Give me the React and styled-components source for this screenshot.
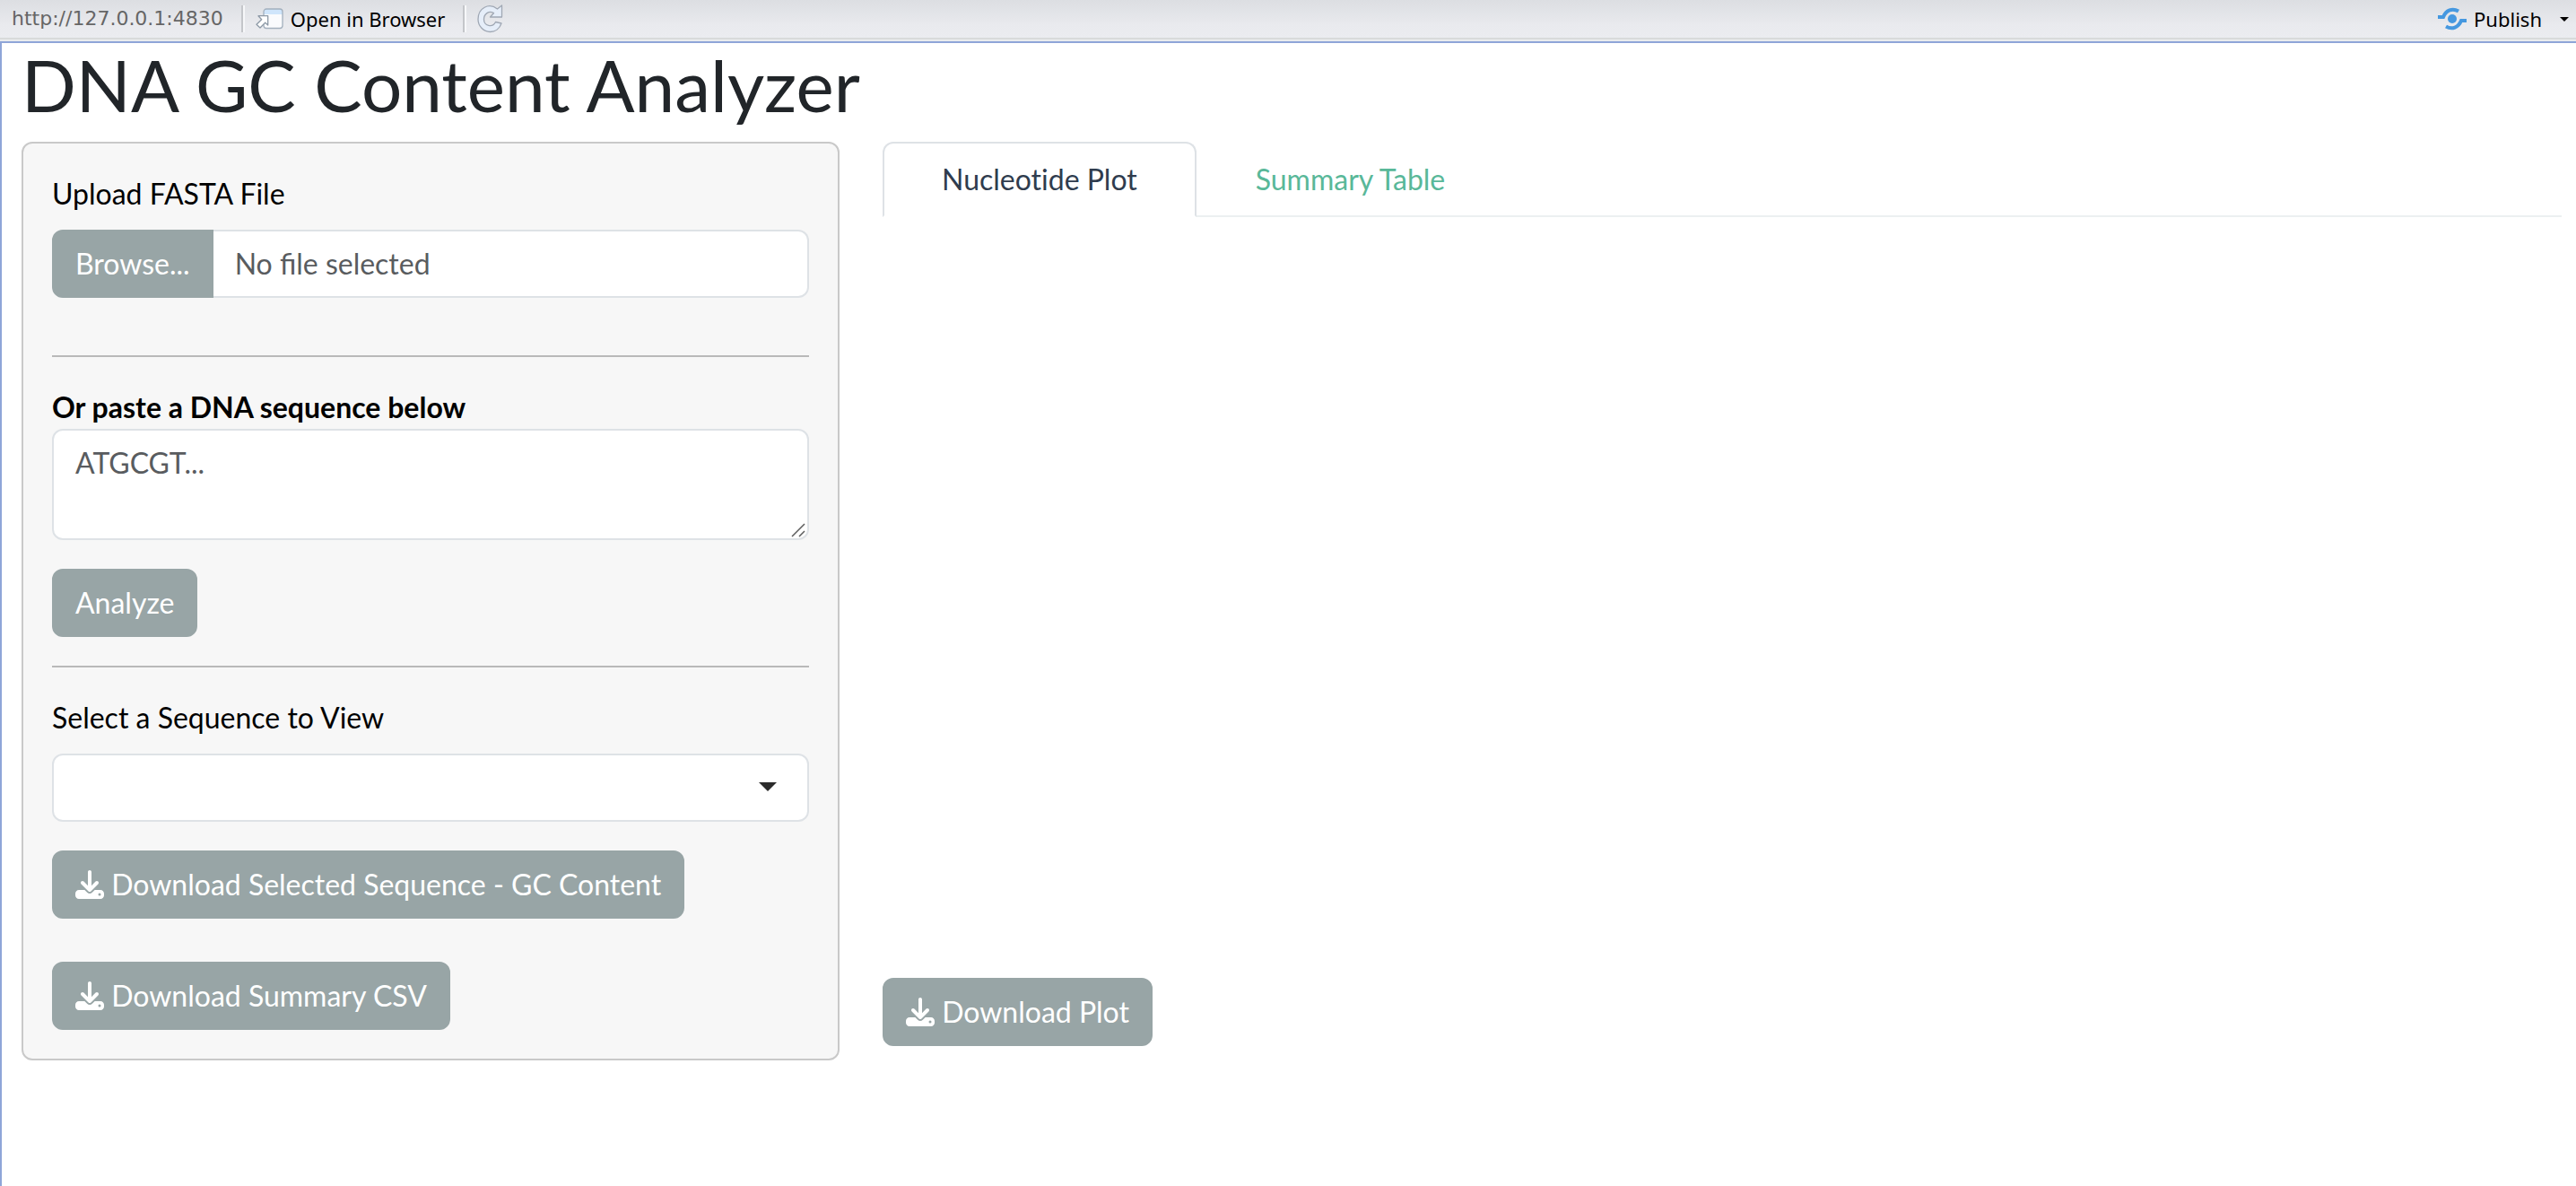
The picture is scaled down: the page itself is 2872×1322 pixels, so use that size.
import React, { useState } from "react";
import styled, { createGlobalStyle, css } from "styled-components";

const GlobalStyle = createGlobalStyle`
  *, *::before, *::after { box-sizing: border-box; }
  html, body { margin: 0; background: #fff; }
  body { font-family: Lato, "Liberation Sans", sans-serif; font-size: 32px; line-height: 48px; color: #212529; }
`;

const Window = styled.div`
  display: flex;
  flex-direction: column;
  min-height: 100vh;
`;

const Toolbar = styled.header`
  display: flex;
  align-items: center;
  height: 46px;
  padding: 0 8px 4px 13px;
  background: linear-gradient(#dcdee2, #e9eaee 28px, #ebecf0 42px, #d8dadb 42px, #d8dadb 44px, #eaecee 44px);
  font-family: "Noto Sans", sans-serif;
  font-size: 22px;
  line-height: 30px;
`;

const Address = styled.span`
  font-family: "DejaVu Sans", sans-serif;
  color: #666;
`;

const Separator = styled.span`
  width: 4px;
  height: 30px;
  margin: 0 12px 0 20px;
  background: linear-gradient(to right, #c4c6ca 2px, #f6f7f9 2px);
`;

const ToolButton = styled.button`
  display: flex;
  align-items: center;
  gap: 8px;
  padding: 0;
  border: 0;
  background: none;
  color: #000;
  font: inherit;
  cursor: pointer;

  svg { display: block; flex: none; }
`;

const PublishGroup = styled.div`
  display: flex;
  align-items: center;
  gap: 20px;
  margin-left: auto;
`;

const Viewer = styled.main`
  flex: 1;
  padding: 0 16px 0 24px;
  box-shadow: inset 2px 2px #8fa5d8;
`;

const Title = styled.h2`
  margin: 0 0 16px;
  font-size: 80px;
  line-height: 96px;
  font-weight: 400;
`;

const Columns = styled.div`
  display: grid;
  grid-template-columns: 19fr 39fr;
  gap: 48px;
  align-items: start;
`;

const Well = styled.form`
  display: flex;
  flex-direction: column;
  padding: 32px;
  border: 2px solid #c9c9c9;
  border-radius: 12px;
  background: #f7f7f7;
`;

const Field = styled.div`
  margin-bottom: 32px;
`;

const Label = styled.label`
  display: block;
  margin-bottom: ${(p) => (p.$strong ? 0 : 16)}px;
  font-weight: ${(p) => (p.$strong ? 700 : 400)};
  color: #000;
`;

const Rule = styled.hr`
  width: 100%;
  height: 2px;
  margin: 32px 0;
  border: 0;
  background: #b9b9b9;
`;

const control = css`
  display: block;
  width: 100%;
  margin: 0;
  padding: 12px 24px;
  border: 2px solid #dee2e6;
  border-radius: 12px;
  background: #fff;
  color: #212529;
  font: inherit;

  &::placeholder { color: #595c5f; opacity: 1; }
`;

const FileRow = styled.div`
  display: flex;
`;

const FileName = styled.input`
  ${control}
  flex: 1;
  min-width: 0;
  border-left: 0;
  border-radius: 0 12px 12px 0;
`;

const TextArea = styled.textarea`
  ${control}
  resize: none;
`;

const Select = styled.select`
  ${control}
  height: 76px;
  appearance: none;
`;

const Overlaid = styled.div`
  position: relative;
`;

const Grip = styled.svg`
  position: absolute;
  right: 4px;
  bottom: 3px;
`;

const Caret = styled.svg`
  position: absolute;
  right: 36px;
  top: 32px;
  pointer-events: none;
`;

const button = css`
  display: inline-block;
  padding: 12px 24px;
  border: 2px solid #98a5a6;
  border-radius: 12px;
  background: #98a5a6;
  color: #fff;
  font: inherit;
  white-space: nowrap;
  text-decoration: none;
  cursor: pointer;
`;

const Button = styled.button`
  ${button}
  align-self: flex-start;
`;

const BrowseButton = styled.label`
  ${button}
  border-radius: 12px 0 0 12px;

  input { display: none; }
`;

const Downloads = styled.div`
  display: flex;
  flex-direction: column;
  align-items: flex-start;
  gap: 48px;
`;

const DownloadLink = styled.a`
  ${button}

  svg { height: 1em; width: 1em; vertical-align: -4px; }
`;

const Tabs = styled.div`
  display: flex;
  border-bottom: 2px solid #ecf0f1;
`;

const Tab = styled.button`
  margin-bottom: -2px;
  padding: 16px 64px;
  border: 2px solid;
  border-color: ${(p) => (p.$active ? "#dee2e6 #dee2e6 #fff" : "transparent")};
  border-radius: 12px 12px 0 0;
  background: ${(p) => (p.$active ? "#fff" : "none")};
  color: ${(p) => (p.$active ? "#2f3c4e" : "#59b899")};
  font: inherit;
  font-variant-ligatures: no-common-ligatures;
  cursor: pointer;
`;

const PlotArea = styled.div`
  height: 800px;
  margin-bottom: 48px;
`;

const DownloadIcon = () => (
  <svg viewBox="0 0 512 512" fill="currentColor" aria-hidden="true">
    <path d="M288 32c0-17.7-14.3-32-32-32s-32 14.3-32 32V274.7l-73.4-73.4c-12.5-12.5-32.8-12.5-45.3 0s-12.5 32.8 0 45.3l128 128c12.5 12.5 32.8 12.5 45.3 0l128-128c12.5-12.5 12.5-32.8 0-45.3s-32.8-12.5-45.3 0L288 274.7V32zM64 352c-35.3 0-64 28.7-64 64v32c0 35.3 28.7 64 64 64H448c35.3 0 64-28.7 64-64V416c0-35.3-28.7-64-64-64H346.5l-45.3 45.3c-25 25-65.5 25-90.5 0L165.5 352H64zm368 56a24 24 0 1 1 0 48 24 24 0 1 1 0-48z" />
  </svg>
);

const OpenIcon = () => (
  <svg width="31" height="24" viewBox="0 0 31 24" aria-hidden="true">
    <rect x="9" y="1" width="21" height="21.500" rx="3" fill="#fafbfd" />
    <path d="M9 7V4q0-3 3-3h15q3 0 3 3v3z" fill="#cfe5fb" />
    <rect x="9" y="1" width="21" height="21.500" rx="3" fill="none" stroke="#a3b0bd" strokeWidth="1.300" />
    <path d="M3 8.700H13.700V19L10.700 16.300 5 22 1 18.300 6.700 12.700z" fill="#fff" stroke="#8d99a6" strokeWidth="1.300" strokeLinejoin="round" />
  </svg>
);

const RefreshIcon = () => (
  <svg width="29" height="34" viewBox="0 0 29 34" aria-hidden="true">
    <path
      d="M27.500 2V15H14.500L18.500 10.500C13 7.500 7.500 11.500 7.500 17.500C7.500 25 17 27.500 20.500 20.500L27 22C25 28 20 31.500 14.500 31.500C7 31.500 1 25 1 17.500C1 5 13 -1.500 22.500 6z"
      fill="#e6eef9"
      stroke="#a0a8b4"
      strokeWidth="1.300"
      strokeLinejoin="round"
    />
  </svg>
);

const PublishIcon = () => (
  <svg width="32" height="26" viewBox="0 0 32 26" fill="none" stroke="#4598e0" strokeWidth="4" aria-hidden="true">
    <circle cx="16" cy="13" r="5" fill="#4598e0" stroke="none" />
    <path d="M0 11h6c3-7.500 10-10.500 17-6.500" />
    <path d="M32 15h-6c-3 7.500-10 10.500-17 6.500" />
  </svg>
);

export default function App() {
  const [tab, setTab] = useState("plot");
  const [fileName, setFileName] = useState("");

  return (
    <>
      <GlobalStyle />
      <Window>
        <Toolbar>
          <Address>http://127.0.0.1:4830</Address>
          <Separator />
          <ToolButton type="button">
            <OpenIcon />
            Open in Browser
          </ToolButton>
          <Separator />
          <ToolButton type="button" aria-label="Refresh">
            <RefreshIcon />
          </ToolButton>
          <PublishGroup>
            <ToolButton type="button">
              <PublishIcon />
              Publish
            </ToolButton>
            <ToolButton type="button" aria-label="Publish options">
              <svg width="10" height="5" viewBox="0 0 10 5" aria-hidden="true">
                <path d="M0 0h10L5 5z" fill="#000" />
              </svg>
            </ToolButton>
          </PublishGroup>
        </Toolbar>
        <Viewer>
          <Title>DNA GC Content Analyzer</Title>
          <Columns>
            <Well onSubmit={(e) => e.preventDefault()}>
              <Field>
                <Label htmlFor="fasta-name">Upload FASTA File</Label>
                <FileRow>
                  <BrowseButton>
                    Browse...
                    <input
                      type="file"
                      onChange={(e) => setFileName(e.target.files[0]?.name ?? "")}
                    />
                  </BrowseButton>
                  <FileName id="fasta-name" type="text" placeholder="No file selected" value={fileName} readOnly />
                </FileRow>
              </Field>
              <Rule />
              <Field>
                <Label $strong htmlFor="sequence">Or paste a DNA sequence below</Label>
                <Overlaid>
                  <TextArea id="sequence" rows={2} placeholder="ATGCGT..." />
                  <Grip width="16" height="16" viewBox="0 0 16 16" stroke="#5c5c5c" strokeWidth="1.5" aria-hidden="true">
                    <path d="M1 15 15 1M9 15l6-6" />
                  </Grip>
                </Overlaid>
              </Field>
              <Button type="submit">Analyze</Button>
              <Rule />
              <Field>
                <Label htmlFor="view">Select a Sequence to View</Label>
                <Overlaid>
                  <Select id="view" />
                  <Caret width="20" height="10" viewBox="0 0 20 10" aria-hidden="true">
                    <path d="M0 0h20L10 10z" fill="#2b2b2b" />
                  </Caret>
                </Overlaid>
              </Field>
              <Downloads>
                <DownloadLink href="#sequence-gc">
                  <DownloadIcon /> Download Selected Sequence - GC Content
                </DownloadLink>
                <DownloadLink href="#summary-csv">
                  <DownloadIcon /> Download Summary CSV
                </DownloadLink>
              </Downloads>
            </Well>
            <section>
              <Tabs role="tablist">
                <Tab type="button" role="tab" aria-selected={tab === "plot"} $active={tab === "plot"} onClick={() => setTab("plot")}>
                  Nucleotide Plot
                </Tab>
                <Tab type="button" role="tab" aria-selected={tab === "summary"} $active={tab === "summary"} onClick={() => setTab("summary")}>
                  Summary Table
                </Tab>
              </Tabs>
              <PlotArea role="tabpanel" />
              <DownloadLink href="#plot">
                <DownloadIcon /> Download Plot
              </DownloadLink>
            </section>
          </Columns>
        </Viewer>
      </Window>
    </>
  );
}
